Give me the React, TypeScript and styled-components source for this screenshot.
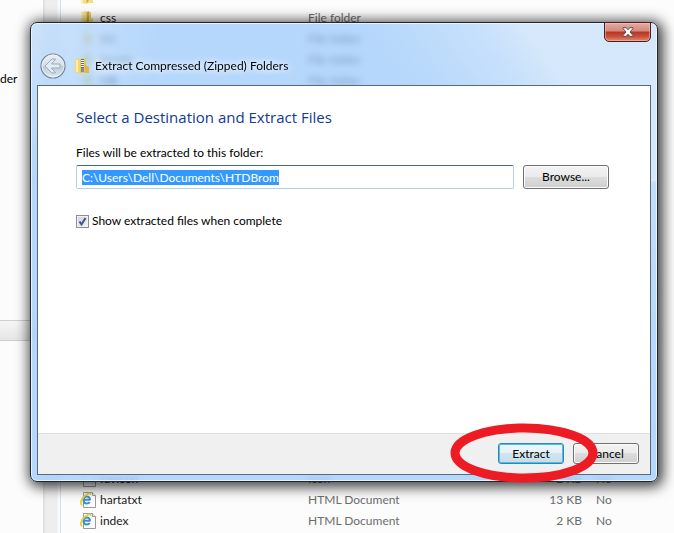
import React, { useEffect, useRef, useState } from "react";
import styled, { createGlobalStyle, css } from "styled-components";

const GlobalStyle = createGlobalStyle`
  * { box-sizing: border-box; }
  body {
    margin: 0;
    background: #fcfcfc;
    color: #000;
    font: 12px/16px Lato, "Open Sans", sans-serif;
  }
  button, input { font: inherit; color: inherit; }
`;

const Desktop = styled.main`
  position: relative;
  display: flex;
  height: 100vh;
  overflow: hidden;
`;

const Navigation = styled.aside`
  display: flex;
  flex-direction: column;
  width: 43px;
`;

const NavTree = styled.div`
  flex: 0 0 60%;
  padding-top: 71px;
`;

const NavDivider = styled.div`
  height: 21px;
  border: 1px solid #cfcfcf;
  border-width: 1px 0;
  background: linear-gradient(#f6f6f6, #e6e6e6);
`;

const NavDetails = styled.div`
  flex: 1;
`;

const Splitter = styled.div`
  width: 18px;
  border: solid #d5dfee;
  border-width: 0 1px 0 0;
  background: linear-gradient(90deg, #dcdcdc, #eeeeee 3px, #eeeeee 14px, #fafafa 15px);
`;

const FileList = styled.section`
  display: flex;
  flex: 1;
  flex-direction: column;
  justify-content: space-between;
  margin-top: -14px;
  padding-bottom: 2px;
`;

const FileRow = styled.div`
  display: grid;
  grid-template-columns: 20px 208px 204px 70px 1fr;
  align-items: center;
  height: 21px;
  padding-left: 19px;
  color: #6d6d6d;
`;

const FileName = styled.span`
  color: #1a1a1a;
`;

const FileSize = styled.span`
  text-align: right;
`;

const FileFlag = styled.span`
  padding-left: 14px;
`;

const Dialog = styled.div`
  position: absolute;
  inset: 22px 16px 51px 30px;
  display: flex;
  flex-direction: column;
  padding: 0 6px 6px;
  border: 1px solid #1d2631;
  border-radius: 7px;
  background:
    radial-gradient(ellipse 130px 150px at 0 0, #dcebfb90, #d3e6fb60 55%, #d3e6fb00),
    linear-gradient(#d3e6fb00 158px, #b3d6fb99 159px),
    linear-gradient(234deg, #dcebfbd0 110px, #d3e6fb90 150px, #d3e6fb00 240px),
    #85befa99;
  backdrop-filter: blur(3px);
  box-shadow: inset 0 0 0 1px #eef7ffdd, 2px 2px 13px 3px #000000c0;
`;

const TitleBar = styled.header`
  position: relative;
  display: flex;
  align-items: center;
  height: 62px;
  padding: 24px 0 0 3px;
`;

const BackButton = styled.button`
  display: flex;
  width: 26px;
  height: 26px;
  padding: 0;
  border: 0;
  background: none;
`;

const Title = styled.h1`
  margin: 0 0 0 6px;
  font-size: 12px;
  font-weight: 400;
  text-shadow: 0 0 8px #fff, 0 0 6px #fff;
`;

const ZipSlot = styled.span`
  display: flex;
  margin-left: 9px;
`;

const CloseButton = styled.button`
  position: absolute;
  top: -1px;
  right: 0;
  display: flex;
  align-items: center;
  justify-content: center;
  width: 47px;
  height: 20px;
  padding: 0 0 1px;
  border: 1px solid #4d1d22;
  border-radius: 0 0 5px 5px;
  background: linear-gradient(#e5aba2, #d5877b 45%, #b8341f 50%, #c6503a 75%, #e08b74);
  box-shadow: inset 0 0 0 1px #f5c9c080;
`;

const Client = styled.form`
  display: flex;
  flex: 1;
  flex-direction: column;
  border: 1px solid #56697e;
  background: #fff;
`;

const Body = styled.div`
  flex: 1;
  padding: 21px 41px 0 38px;
`;

const Heading = styled.h2`
  margin: 0;
  color: #103a94;
  font-family: "Open Sans", "Noto Sans", sans-serif;
  font-size: 15px;
  font-weight: 400;
  line-height: 20px;
`;

const FieldLabel = styled.label`
  display: block;
  margin-top: 18px;
`;

const FieldRow = styled.div`
  display: flex;
  gap: 9px;
  margin-top: 4px;
`;

const PathInput = styled.input`
  flex: 1;
  min-width: 0;
  height: 24px;
  padding: 0 5px;
  border: 1px solid #b5cfe7;
  border-top-color: #3d6d9c;
  border-radius: 2px;
  outline: 0;
  background: #fff;
  &::selection { background: #3399ff; color: #fff; }
`;

const PushButton = styled.button<{ $primary?: boolean; $wide?: boolean }>`
  width: ${(p) => (p.$wide ? 86 : 66)}px;
  height: ${(p) => (p.$wide ? 24 : 21)}px;
  padding: 0;
  border: 1px solid #707070;
  border-radius: 3px;
  background: linear-gradient(#f3f3f3, #ebebeb 48%, #dddddd 50%, #cfcfcf);
  box-shadow: inset 0 0 0 1px #fcfcfc;
  line-height: 18px;
  ${(p) =>
    p.$primary &&
    css`
      border-color: #3c7fb1;
      background: linear-gradient(#f0f7fa, #e5f1f6 48%, #d2e5ee 50%, #c5dde8);
      box-shadow: inset 0 0 0 1px #3fc4ef;
    `}
`;

const CheckLabel = styled.label`
  display: flex;
  align-items: center;
  gap: 3px;
  width: max-content;
  margin-top: 24px;
`;

const CheckBox = styled.input`
  appearance: none;
  width: 13px;
  height: 13px;
  margin: 0;
  border: 1px solid #8e8f8f;
  background: linear-gradient(135deg, #cbd0d8, #f4f5f7);
  box-shadow: inset 0 0 0 1px #f4f4f4;
`;

const CheckSlot = styled.span`
  display: grid;
  > * { grid-area: 1 / 1; }
  > svg { pointer-events: none; }
`;

const Footer = styled.footer`
  display: flex;
  justify-content: flex-end;
  gap: 9px;
  padding: 9px 11px 10px;
  border-top: 1px solid #dfdfdf;
  background: #f0f0f0;
`;

const Marked = styled.div`
  position: relative;
  z-index: 1;
  display: flex;
`;

const Ring = styled.svg`
  position: absolute;
  top: -20px;
  left: -48px;
  pointer-events: none;
`;

function FolderIcon() {
  return (
    <svg width="14" height="16" viewBox="0 0 14 16">
      <path d="M1 2 7 1v14l-6-1z" fill="#f4e08a" />
      <path d="M6 2h5v12H6z" fill="#e8cb62" />
      <path d="M7 2 9 1v9l-2 5z" fill="#cfa838" />
      <path d="M9 8h4v6H7l2-3z" fill="#f3df82" />
      <path d="M1 2.500 3 2v12l-2-.5z" fill="#fbf1b4" />
    </svg>
  );
}

function PageIcon({ browser }: { browser?: boolean }) {
  return (
    <svg width="17" height="16" viewBox="0 0 17 16">
      <path d="M3.500.5h9l3 3v12h-12z" fill="#fdfdfd" stroke="#9a9a9a" />
      <path d="M12.500.5v3h3" fill="#eee" stroke="#9a9a9a" />
      {browser && (
        <>
          <path
            d="M10 7.800H4.500M9.600 10C9 11.200 8 11.600 6.800 11.600 4.900 11.600 3.500 10.200 3.500 8S4.900 4.400 6.800 4.400 10.100 5.700 10 8.200"
            fill="none"
            stroke="#3a90cf"
            strokeWidth="2"
          />
          <path
            d="M2.500 13.200C-1 12.500 1.200 5 7.500 2c2-1 3.500-.8 3 1"
            fill="none"
            stroke="#e6cf3c"
            strokeWidth="1.800"
          />
        </>
      )}
    </svg>
  );
}

function ZipIcon() {
  return (
    <svg width="14" height="16" viewBox="0 0 14 16">
      <path d="M0 1.500 6 .5v15l-6-1z" fill="#f3d868" />
      <path d="M5 1h6v14H5z" fill="#e7c655" />
      <path d="M10 7l4 2v6h-4z" fill="#dcb843" />
      <path d="M2 2v12" stroke="#fbf0ab" strokeWidth="2" />
      <path d="M7.500 1v12" stroke="#f4f4f4" strokeWidth="3" />
      <path d="M7.500 1v12" stroke="#6b6b70" strokeWidth="3" strokeDasharray="1 1" />
      <path d="M6 10h3v4H6z" fill="#8b8b90" />
    </svg>
  );
}

function BackIcon() {
  return (
    <svg width="26" height="26" viewBox="0 0 26 26">
      <defs>
        <linearGradient id="orb" x2="0" y2="1">
          <stop stopColor="#e9f1f8" />
          <stop offset=".48" stopColor="#d5dfe8" />
          <stop offset=".52" stopColor="#bccbd8" />
          <stop offset="1" stopColor="#dfecf6" />
        </linearGradient>
      </defs>
      <circle cx="13" cy="13" r="12" fill="url(#orb)" stroke="#748797" strokeWidth="1.200" />
      <circle cx="13" cy="13" r="11" fill="none" stroke="#f2f8fd" strokeOpacity=".7" />
      <path
        d="M5 13l7-7h3.500L11.500 11H20v4h-8.500l4 5H12z"
        fill="#e4ecf3"
        stroke="#9cabb8"
        strokeLinejoin="round"
      />
    </svg>
  );
}

function CloseIcon() {
  return (
    <svg width="12" height="10" viewBox="0 0 12 10">
      <path
        d="M1 .7h3.200L6 2.800 7.800.7H11v.8L8 5l3 3.500v.8H7.800L6 7.200 4.200 9.300H1v-.8L4 5 1 1.500z"
        fill="#fff"
        stroke="#5c4a52"
      />
    </svg>
  );
}

type FileEntry = { name: string; type: string; size?: string; flag?: string; kind: "folder" | "page" | "browser" };

const folders: FileEntry[] = [
  { name: "", type: "", kind: "folder" },
  { name: "css", type: "File folder", kind: "folder" },
  { name: "DC", type: "File folder", kind: "folder" },
  { name: "forum", type: "File folder", kind: "folder" },
  { name: "HB", type: "File folder", kind: "folder" },
];

const documents: FileEntry[] = [
  { name: "favicon", type: "Icon", size: "2 KB", flag: "No", kind: "page" },
  { name: "hartatxt", type: "HTML Document", size: "13 KB", flag: "No", kind: "browser" },
  { name: "index", type: "HTML Document", size: "2 KB", flag: "No", kind: "browser" },
];

function FileRows({ entries }: { entries: FileEntry[] }) {
  return (
    <div>
      {entries.map((f, i) => (
        <FileRow key={i}>
          {f.kind === "folder" ? <FolderIcon /> : <PageIcon browser={f.kind === "browser"} />}
          <FileName>{f.name}</FileName>
          <span>{f.type}</span>
          <FileSize>{f.size}</FileSize>
          <FileFlag>{f.flag}</FileFlag>
        </FileRow>
      ))}
    </div>
  );
}

export default function App() {
  const [path, setPath] = useState("C:\\Users\\Dell\\Documents\\HTDBrom");
  const [show, setShow] = useState(true);
  const pathRef = useRef<HTMLInputElement>(null);

  useEffect(() => {
    pathRef.current?.focus();
    pathRef.current?.select();
  }, []);

  return (
    <>
      <GlobalStyle />
      <Desktop>
        <Navigation>
          <NavTree>der</NavTree>
          <NavDivider />
          <NavDetails />
        </Navigation>
        <Splitter />
        <FileList>
          <FileRows entries={folders} />
          <FileRows entries={documents} />
        </FileList>
        <Dialog role="dialog" aria-labelledby="dialog-title">
          <TitleBar>
            <BackButton type="button" aria-label="Back">
              <BackIcon />
            </BackButton>
            <ZipSlot>
              <ZipIcon />
            </ZipSlot>
            <Title id="dialog-title">Extract Compressed (Zipped) Folders</Title>
            <CloseButton type="button" aria-label="Close">
              <CloseIcon />
            </CloseButton>
          </TitleBar>
          <Client onSubmit={(e) => e.preventDefault()}>
            <Body>
              <Heading>Select a Destination and Extract Files</Heading>
              <FieldLabel htmlFor="path">Files will be extracted to this folder:</FieldLabel>
              <FieldRow>
                <PathInput
                  id="path"
                  ref={pathRef}
                  type="text"
                  spellCheck={false}
                  value={path}
                  onChange={(e) => setPath(e.target.value)}
                />
                <PushButton type="button" $wide>
                  Browse...
                </PushButton>
              </FieldRow>
              <CheckLabel>
                <CheckSlot>
                  <CheckBox type="checkbox" checked={show} onChange={(e) => setShow(e.target.checked)} />
                  {show && (
                    <svg width="13" height="13" viewBox="0 0 13 13">
                      <path d="M3.500 6.500 5.500 9.500 9.500 3" fill="none" stroke="#3b5795" strokeWidth="2" />
                    </svg>
                  )}
                </CheckSlot>
                Show extracted files when complete
              </CheckLabel>
            </Body>
            <Footer>
              <Marked>
                <PushButton type="submit" $primary>
                  Extract
                </PushButton>
                <Ring width="148" height="60" viewBox="0 0 148 60">
                  <ellipse cx="74" cy="30" rx="69" ry="25" fill="none" stroke="#ed1c24" strokeWidth="9" />
                </Ring>
              </Marked>
              <PushButton type="button">Cancel</PushButton>
            </Footer>
          </Client>
        </Dialog>
      </Desktop>
    </>
  );
}
